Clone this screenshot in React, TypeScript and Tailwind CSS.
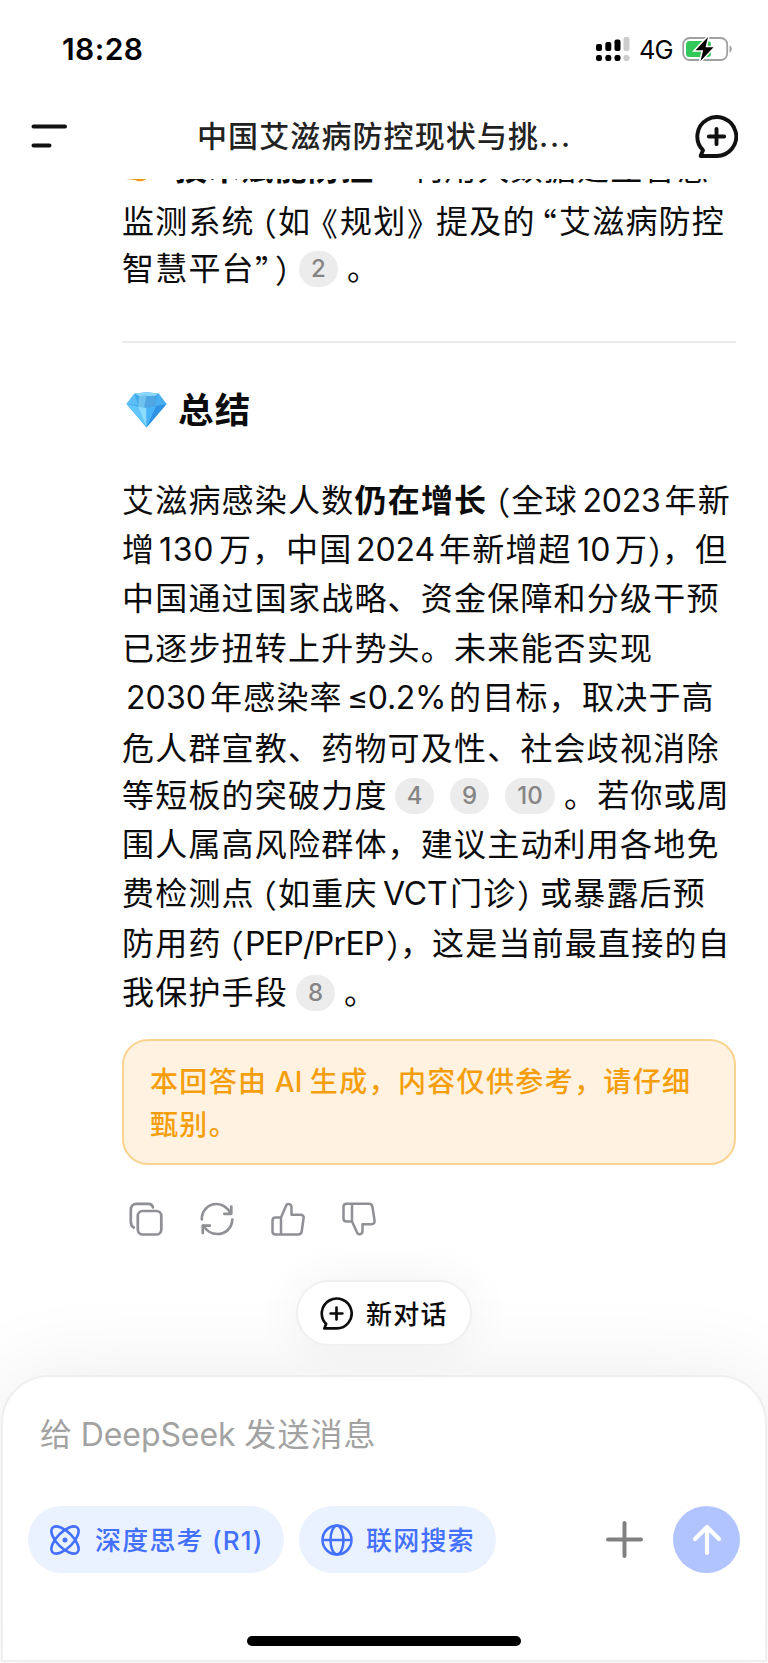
import type { ReactNode } from "react";

function ChatPlusIcon({ size, stroke }: { size: number; stroke: number }) {
  return (
    <svg width={size} height={size} viewBox="0 0 42 42" fill="none" stroke="currentColor" strokeWidth={stroke} strokeLinecap="round" strokeLinejoin="round">
      <path d="M21 40H5.500l2.300-5.600A19 19 0 1 1 21 40Z" />
      <path d="M21 13.500v15M13.500 21h15" />
    </svg>
  );
}

function Badge({ children, className = "w-[39px]" }: { children: ReactNode; className?: string }) {
  return (
    <span className={`${className} flex h-[36px] shrink-0 items-center justify-center rounded-full bg-[#ececec] text-[24px] font-medium tracking-normal text-[#858585]`}>
      {children}
    </span>
  );
}

// One line of the answer text
function Line({ children, className = "h-[49.2px]" }: { children: ReactNode; className?: string }) {
  return <div className={`${className} flex items-center leading-[48px] whitespace-nowrap`}>{children}</div>;
}

// Opening punctuation, kept against the text that follows it
function Open({ children, className = "w-[23px]" }: { children: ReactNode; className?: string }) {
  return (
    <span className={`${className} flex shrink-0 justify-end font-['Noto_Sans_CJK_SC'] [font-feature-settings:'halt']`}>
      {children}
    </span>
  );
}

// Closing punctuation, kept against the text before it
function Close({ children, className = "w-[23px]" }: { children: ReactNode; className?: string }) {
  return (
    <span className={`${className} block shrink-0 font-['Noto_Sans_CJK_SC'] [font-feature-settings:'halt']`}>{children}</span>
  );
}

// Run of text with a fixed advance
function Run({ children, className }: { children: ReactNode; className: string }) {
  return <span className={`${className} block shrink-0`}>{children}</span>;
}

function StatusBar() {
  return (
    <div className="flex h-[98px] shrink-0 items-center pl-[62px] pr-[36px]">
      <span className="text-[30px] font-semibold leading-none tracking-[0.400px] text-black">18:28</span>
      <div className="ml-auto flex items-center">
        <svg width="34" height="24" viewBox="0 0 34 24">
          <rect x="0" y="7" width="6" height="7" rx="2" />
          <rect x="9.300" y="5" width="6" height="9" rx="2" />
          <rect x="18.500" y="2.500" width="6" height="11.500" rx="2" />
          <rect x="27.500" y="0" width="6" height="14" rx="2" fill="#cccccc" />
          <rect x="0" y="18" width="6" height="6" rx="2.200" />
          <rect x="9.300" y="18" width="6" height="6" rx="2.200" />
          <rect x="18.500" y="18" width="6" height="6" rx="2.200" />
          <rect x="27.500" y="18" width="6" height="6" rx="2.200" fill="#cccccc" />
        </svg>
        <span className="ml-[9px] w-[34px] pt-px text-[25.500px] leading-none tracking-[-1px] text-black">4G</span>
        <svg className="ml-[9px]" width="50" height="26" viewBox="0 0 50 26">
          <rect x="1.200" y="2" width="44" height="22" rx="6.500" fill="#fff" stroke="#a0a0a0" strokeWidth="1.800" />
          <path d="M47.500 9.500v7c3-1 3-6 0-7Z" fill="#a0a0a0" />
          <rect x="4" y="5" width="25" height="16" rx="3.500" fill="#34c759" />
          <path d="M26 1 13.500 14.200h7.700L18.500 25 31.500 11.300h-8Z" fill="#000" stroke="#fff" strokeWidth="3" paintOrder="stroke" />
        </svg>
      </div>
    </div>
  );
}

function Header() {
  return (
    <header className="flex h-[76px] shrink-0 items-center pl-[31px] pr-[30px]">
      <svg width="37" height="24" viewBox="0 0 37 24" stroke="#111" strokeWidth="4" strokeLinecap="round">
        <path d="M2.500 2.500h31.500M2.500 21.500h16" />
      </svg>
      <h1 className="ml-[129px] w-[376px] text-[30px] font-medium leading-[44px] tracking-[1.100px] whitespace-nowrap text-[#222]">
        中国艾滋病防控现状与挑<span className="tracking-[1.800px]">...</span>
      </h1>
      <button className="ml-auto text-[#111]">
        <ChatPlusIcon size={43} stroke={3.8} />
      </button>
    </header>
  );
}

function Gem() {
  return (
    <svg className="-mt-[2px]" width="41" height="36" viewBox="0 0 41 36">
      <path d="M8.500 1.500 20.500.300l12 1.200L40.500 12 20.500 35.500.500 12Z" fill="#3fa9ee" />
      <path d="M8.500 1.500 12 13 .500 12Z" fill="#5dbdf5" />
      <path d="M32.500 1.500 29 13l11.500-1Z" fill="#4bb0f3" />
      <path d="M8.500 1.500 20.500.300l12 1.200-3.500 2.500H13Z" fill="#8ad6fb" />
      <path d="M13 4h16l1 10.500-9.500 1.500L12 14.500Z" fill="#4fa6e2" />
      <path d="M13 4 20.500 3.500 18 15.500 12 14.500Z" fill="#6fc1f0" />
      <path d="M.500 12 12 14.500 20.500 35.500Z" fill="#63c6fa" />
      <path d="M12 14.500 20.500 16v19.500Z" fill="#8bdcff" />
      <path d="M20.500 16 30 14.500 20.500 35.500Z" fill="#48b4f8" />
      <path d="M40.500 12 30 14.500 20.500 35.500Z" fill="#2d92e4" />
    </svg>
  );
}

function Actions() {
  return (
    <div className="mt-[37px] flex h-[34px] items-center gap-[37px] pl-[7px] text-[#8e9095]">
      <svg width="34" height="34" viewBox="0 0 34 34" fill="none" stroke="currentColor" strokeWidth="2.700" strokeLinecap="round">
        <rect x="8.800" y="9" width="23.500" height="23.500" rx="5" />
        <path d="M24 5.500C23.500 3 22 1.800 19.500 1.800H7.500C4 1.800 1.800 4 1.800 7.500V20c0 2.500 1 4.300 3 5.500" />
      </svg>
      <svg width="34" height="34" viewBox="0 0 34 34" fill="none" stroke="currentColor" strokeWidth="2.700" strokeLinecap="round" strokeLinejoin="round">
        <path d="M1.800 17.500C1.500 9 8 2 16.500 2c6 0 11.500 4 14 9.500" />
        <path d="M31.300 4.500v7.300h-7" />
        <path d="M32.300 17.500C32 26 25.500 32 17.500 32c-6 0-11.500-3.500-14-8.500" />
        <path d="M2.800 31v-7.300h7" />
      </svg>
      <svg width="34" height="34" viewBox="0 0 34 34" fill="none" stroke="currentColor" strokeWidth="2.500" strokeLinejoin="round">
        <path d="M10 15.500 15.200 3.400c1.200-2.500 5.300-1.500 5.300 1.800v7.500h9c2 0 3.400 1.500 3.100 3.500l-1.900 13c-.3 2-1.700 3.300-3.700 3.300H4.500c-2 0-3-1.200-3-3V18.500c0-2 1-3 3-3H10v17" />
      </svg>
      <svg width="34" height="34" viewBox="0 0 34 34" fill="none" stroke="currentColor" strokeWidth="2.500" strokeLinejoin="round">
        <path d="M10 19.500 15.200 30.800c1.200 2.500 5.300 1.500 5.300-1.800v-6.800h9c2 0 3.400-1.500 3.100-3.500l-2.100-13.500c-.3-2-1.700-3.400-3.700-3.400H4.500c-2 0-3 1.200-3 3V16.500c0 2 1 3 3 3H10V1.800" />
      </svg>
    </div>
  );
}

function Answer() {
  return (
    <main className="min-h-0 flex-1 overflow-hidden pt-[5px]">
      <div className="h-full overflow-hidden pl-[122px] pr-[32px] text-[32px] tracking-[1.200px] text-[#0c0c0c]">
        <Line className="-mt-[35px] h-[49px]">
          <svg className="ml-[4px] mr-[27px] shrink-0" width="22" height="26" viewBox="0 0 22 26">
            <path d="M0 8h20l1 14.500c-4 3.500-9 3.500-12 1.500L0 23Z" fill="#f39a1a" />
          </svg>
          <Run className="w-[199px] font-bold">技术赋能防控</Run>
          <Run className="w-[37px] pb-[14px] font-bold">：</Run>
          <span>利用大数据建立智慧</span>
        </Line>
        <Line className="mt-[3px] h-[51px]">
          <Run className="w-[133px]">监测系统</Run>
          <Open>（</Open>
          <Run className="w-[33px]">如</Run>
          <Open className="w-[28px]">《</Open>
          <Run className="ml-px w-[67px]">规划</Run>
          <Close className="w-[29px]">》</Close>
          <Run className="w-[100px]">提及的</Run>
          <Open className="w-[22px]">“</Open>
          <span className="ml-px">艾滋病防控</span>
        </Line>
        <Line className="h-[43px]">
          <Run className="w-[133px]">智慧平台</Run>
          <Close className="w-[20px]">”</Close>
          <Close className="w-[24px]">）</Close>
          <Badge>2</Badge>
          <span className="ml-[9px]">。</span>
        </Line>

        <hr className="mt-[51px] border-t-2 border-[#ebebeb]" />

        <h2 className="mt-[40px] flex h-[56px] items-center pl-[4px] text-[35.500px] font-bold">
          <Gem />
          <span className="ml-[11px]">总结</span>
        </h2>

        <div className="mt-[37.400px]">
          <Line>
            <Run className="w-[232.500px]">艾滋病感染人数</Run>
            <Run className="w-[133px] font-bold">仍在增长</Run>
            <Open className="w-[24px]">（</Open>
            <Run className="w-[71px]">全球</Run>
            <Run className="w-[82px] tracking-[-0.200px]">2023</Run>
            <span>年新</span>
          </Line>
          <Line>
            <Run className="w-[37px]">增</Run>
            <Run className="w-[60px] tracking-[0.700px]">130</Run>
            <Run className="w-[67px]">万，</Run>
            <Run className="w-[70px]">中国</Run>
            <Run className="w-[83px] tracking-[-0.100px]">2024</Run>
            <Run className="w-[138px]">年新增超</Run>
            <Run className="w-[38px] tracking-[0.300px]">10</Run>
            <Run className="w-[33px]">万</Run>
            <Close className="w-[14px]">）</Close>
            <Run className="w-[33px]">，</Run>
            <span>但</span>
          </Line>
          <Line>中国通过国家战略、资金保障和分级干预</Line>
          <Line>已逐步扭转上升势头。未来能否实现</Line>
          <Line>
            <Run className="ml-[4px] w-[84px] tracking-[0.100px]">2030</Run>
            <Run className="w-[137px]">年感染率</Run>
            <Run className="w-[102px] tracking-[-0.300px]">≤0.2%</Run>
            <Run className="w-[133px]">的目标，</Run>
            <span>取决于高</span>
          </Line>
          <Line className="mt-[4px] h-[45.200px]">危人群宣教、药物可及性、社会歧视消除</Line>
          <Line>
            <Run className="w-[273px]">等短板的突破力度</Run>
            <Badge>4</Badge>
            <Badge className="ml-[16px] w-[39px]">9</Badge>
            <Badge className="ml-[16px] w-[50px]">10</Badge>
            <span className="ml-[9px]">。若你或周</span>
          </Line>
          <Line>围人属高风险群体，建议主动利用各地免</Line>
          <Line>
            <Run className="w-[133px]">费检测点</Run>
            <Open>（</Open>
            <Run className="w-[105px]">如重庆</Run>
            <Run className="w-[67px] tracking-[-0.200px]">VCT</Run>
            <Run className="w-[67px]">门诊</Run>
            <Close>）</Close>
            <span>或暴露后预</span>
          </Line>
          <Line>
            <Run className="w-[100px]">防用药</Run>
            <Open>（</Open>
            <Run className="w-[141px] tracking-[-0.700px]">PEP/PrEP</Run>
            <Close className="w-[14px]">）</Close>
            <Run className="w-[32px]">，</Run>
            <span>这是当前最直接的自</span>
          </Line>
          <Line>
            <Run className="w-[174px]">我保护手段</Run>
            <Badge>8</Badge>
            <span className="ml-[9px]">。</span>
          </Line>
        </div>

        <div className="mt-[22px] h-[126px] rounded-[26px] border-2 border-[#fbd391] bg-[#fff2e0] px-[26px] pt-[20px] text-[28px] font-medium leading-[43px] tracking-[1.350px] text-[#f59e0b]">
          <p className="whitespace-nowrap">
            本回答由<span className="tracking-[0px]"> AI </span>生成，内容仅供参考，请仔细
          </p>
          <p>甄别。</p>
        </div>

        <Actions />
      </div>
    </main>
  );
}

function Composer() {
  return (
    <footer className="mx-px mb-px flex h-[287px] shrink-0 flex-col rounded-t-[48px] border-2 border-[#eeeeee] bg-white shadow-[0_0_90px_rgba(0,0,0,0.080)]">
      <p className="mt-[34px] pl-[37px] text-[32px] leading-[48px] tracking-[-0.100px] text-[#a2a2a2]">
        给 DeepSeek <span className="tracking-[1.100px]">发送消息</span>
      </p>
      <div className="mt-[47px] flex h-[67px] items-center pl-[25px] pr-[25px] text-[26px] font-medium tracking-[1.200px] text-[#4470ff]">
        <button className="flex h-full w-[256px] items-center rounded-full bg-[#ebf2ff] pl-[22px] whitespace-nowrap">
          <svg width="30" height="30" viewBox="0 0 30 30" fill="none" stroke="currentColor" strokeWidth="2.600">
            <ellipse cx="15" cy="15" rx="17.500" ry="8" transform="rotate(45 15 15)" />
            <ellipse cx="15" cy="15" rx="17.500" ry="8" transform="rotate(-45 15 15)" />
            <circle cx="15" cy="15" r="2.500" fill="currentColor" stroke="none" />
          </svg>
          <span className="ml-[15px] pt-[2px]">深度思考 (R1)</span>
        </button>
        <button className="ml-[15px] flex h-full w-[197px] items-center rounded-full bg-[#ebf2ff] pl-[22px] whitespace-nowrap">
          <svg width="32" height="32" viewBox="0 0 32 32" fill="none" stroke="currentColor" strokeWidth="2.500">
            <circle cx="16" cy="16" r="14.500" />
            <ellipse cx="16" cy="16" rx="6.500" ry="14.500" />
            <path d="M1.500 16h29" />
          </svg>
          <span className="ml-[13px] pt-[2px]">联网搜索</span>
        </button>
        <button className="ml-auto">
          <svg width="37" height="37" viewBox="0 0 37 37" stroke="#808080" strokeWidth="4" strokeLinecap="round">
            <path d="M18.500 2v33M2 18.500h33" />
          </svg>
        </button>
        <button className="ml-[30px] flex size-[67px] items-center justify-center rounded-full bg-[#b1c4ff]">
          <svg width="30" height="32" viewBox="0 0 30 32" fill="none" stroke="#fff" strokeWidth="4.200" strokeLinecap="round" strokeLinejoin="round">
            <path d="M15 29V3M3 15 15 3l12 12" />
          </svg>
        </button>
      </div>
      <div className="mx-auto mt-[63px] h-[10px] w-[274px] rounded-full bg-black" />
    </footer>
  );
}

export default function App() {
  return (
    <div className="flex h-[1663px] w-[768px] flex-col overflow-hidden bg-white font-['Inter','Noto_Sans_CJK_SC',sans-serif]">
      <StatusBar />
      <Header />
      <Answer />
      <div className="z-10 flex h-[95px] shrink-0 justify-center">
        <button className="flex h-[66px] w-[176px] items-center rounded-full border-2 border-[#f0f0f0] bg-white pl-[22px] text-[26px] font-medium tracking-[1.200px] whitespace-nowrap text-[#0c0c0c] shadow-[0_0_50px_rgba(0,0,0,0.060)]">
          <ChatPlusIcon size={33} stroke={3.4} />
          <span className="ml-[13px] pt-[2px]">新对话</span>
        </button>
      </div>
      <Composer />
    </div>
  );
}
